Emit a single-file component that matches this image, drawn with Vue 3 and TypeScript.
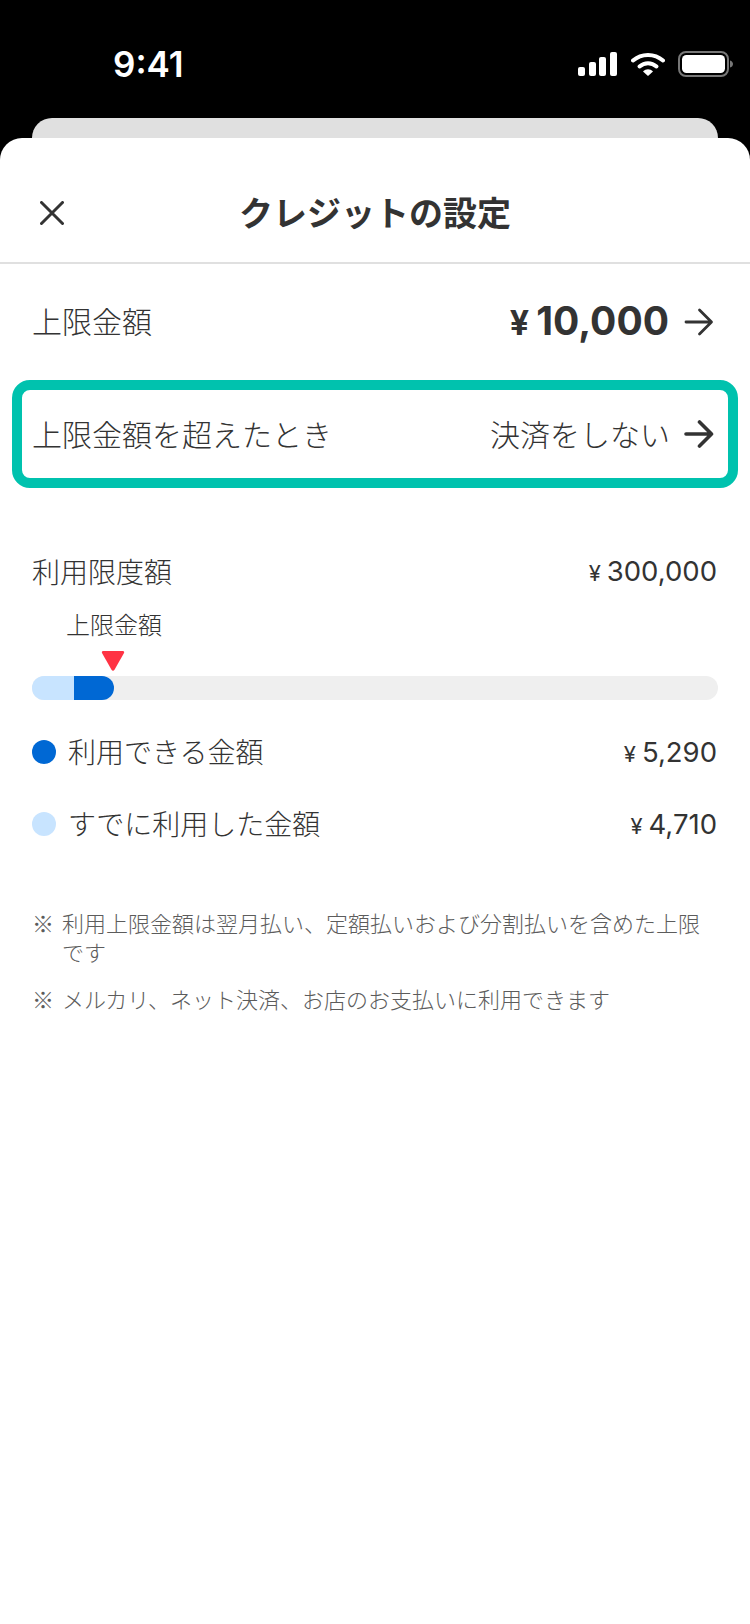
<script setup lang="ts">
interface Legend { label: string; amount: string; tone: string }
const legend: Legend[] = [
  { label: '利用できる金額', amount: '5,290', tone: 'dark' },
  { label: 'すでに利用した金額', amount: '4,710', tone: 'light' },
]
const notes: string[] = [
  '利用上限金額は翌月払い、定額払いおよび分割払いを含めた上限です',
  'メルカリ、ネット決済、お店のお支払いに利用できます',
]
</script>

<template>
  <div class="page">
    <div class="status">
      <span class="time">9:41</span>
      <div class="status-icons">
        <svg class="signal" width="40" height="24" viewBox="0 0 40 24" fill="#fff">
          <rect x="0" y="15" width="7" height="9" rx="2" />
          <rect x="11" y="10" width="7" height="14" rx="2" />
          <rect x="21" y="5" width="7" height="19" rx="2" />
          <rect x="32" y="0" width="7" height="24" rx="2" />
        </svg>
        <svg class="wifi" width="34" height="24" viewBox="0 0 34 24">
          <path d="M2 8.5C10.500 1 23.500 1 32 8.500" fill="none" stroke="#fff" stroke-width="4" stroke-linecap="round" />
          <path d="M8.500 14.500C13.500 10 20.500 10 25.500 14.500" fill="none" stroke="#fff" stroke-width="4" stroke-linecap="round" />
          <path d="M12 19.500C15 16.500 19 16.500 22 19.500L17 24Z" fill="#fff" />
        </svg>
        <svg class="battery" width="56" height="26" viewBox="0 0 56 26">
          <rect x="1" y="1" width="49" height="24" rx="7" fill="none" stroke="#777" stroke-width="2" />
          <rect x="4" y="4" width="43" height="18" rx="4.500" fill="#fff" />
          <path d="M52 9.500C54 10 55 11.500 55 13C55 14.500 54 16 52 16.500Z" fill="#777" />
        </svg>
      </div>
    </div>

    <div class="peek"></div>

    <main class="sheet">
      <header class="sheet-header">
        <svg class="close" width="24" height="24" viewBox="0 0 24 24">
          <path d="M1.500 1.500L22.500 22.500M22.500 1.500L1.500 22.500" stroke="#333" stroke-width="3" stroke-linecap="round" />
        </svg>
        <h1 class="title">クレジットの設定</h1>
      </header>

      <div class="row row-limit">
        <span class="row-label">上限金額</span>
        <span class="row-value">
          <span class="price"><span class="yen-big">¥</span>10,000</span>
          <svg class="arrow" width="30" height="28" viewBox="0 0 30 28">
            <path d="M2 14H27M15.500 2L27.500 14L15.500 26" fill="none" stroke="#333" stroke-width="2.800" stroke-linecap="round" stroke-linejoin="round" />
          </svg>
        </span>
      </div>

      <div class="row row-focus">
        <span class="row-label row-label-focus">上限金額を超えたとき</span>
        <span class="row-value row-value-tight">
          <span class="choice">決済をしない</span>
          <svg class="arrow" width="30" height="28" viewBox="0 0 30 28">
            <path d="M2 14H27M15.500 2L27.500 14L15.500 26" fill="none" stroke="#333" stroke-width="3.600" stroke-linecap="round" stroke-linejoin="round" />
          </svg>
        </span>
      </div>

      <section class="usage">
        <div class="usage-top">
          <span class="usage-title">利用限度額</span>
          <span class="amount"><span class="yen">¥</span>300,000</span>
        </div>
        <div class="marker-label">上限金額</div>
        <svg class="marker" width="24" height="21" viewBox="0 0 24 21">
          <path d="M2 1H22C23 1 23.500 2 23 3L13.500 19.800C12.800 21 11.200 21 10.500 19.800L1 3C0.500 2 1 1 2 1Z" fill="#ff3344" />
        </svg>
        <div class="track">
          <div class="seg seg-used"></div>
          <div class="seg seg-left"></div>
        </div>
        <div v-for="item in legend" :key="item.label" class="legend">
          <span class="dot" :class="item.tone"></span>
          <span class="legend-label">{{ item.label }}</span>
          <span class="amount"><span class="yen">¥</span>{{ item.amount }}</span>
        </div>
      </section>

      <section class="notes">
        <div v-for="note in notes" :key="note" class="note">
          <span class="note-mark">※</span>
          <span class="note-text">{{ note }}</span>
        </div>
      </section>
    </main>
  </div>
</template>

<style>
html, body { margin: 0; background: #000; }
</style>

<style scoped>
.page {
  width: 750px;
  height: 1624px;
  background: #000;
  display: flex;
  flex-direction: column;
  overflow: hidden;
  font-family: "Noto Sans CJK JP", "Noto Sans", sans-serif;
  color: #333;
}
.status {
  height: 118px;
  flex: none;
  display: flex;
  justify-content: space-between;
  align-items: flex-start;
  padding: 0 16px 0 113px;
  box-sizing: border-box;
}
.time {
  margin-top: 42px;
  font-family: Inter, sans-serif;
  font-weight: 600;
  font-size: 35px;
  line-height: 44px;
  color: #fff;
}
.status-icons {
  display: flex;
  align-items: center;
  margin-top: 51px;
  gap: 13px;
}
.peek {
  flex: none;
  height: 20px;
  margin: 0 32px;
  background: #e0e0e0;
  border-radius: 20px 20px 0 0;
}
.sheet {
  flex: 1;
  background: #fff;
  border-radius: 22px 22px 0 0;
}
.sheet-header {
  height: 126px;
  box-sizing: border-box;
  padding: 24px 0 0 40px;
  border-bottom: 2px solid #e0e0e0;
  display: flex;
  align-items: center;
}
.close { flex: none; margin-top: 2px; }
.title {
  flex: 1;
  margin: 0 64px 0 0;
  text-align: center;
  font-size: 34px;
  font-weight: 700;
  line-height: 48px;
  color: #333;
}
.row {
  display: flex;
  align-items: center;
  justify-content: space-between;
}
.row-limit {
  height: 116px;
  padding: 0 36px 0 32px;
}
.row-focus {
  height: 108px;
  box-sizing: border-box;
  margin: 0 12px;
  padding: 0 14px 0 10px;
  border: 10px solid #00c2ae;
  border-radius: 18px;
}
.row-label {
  font-size: 30px;
  font-weight: 300;
  line-height: 44px;
  padding-bottom: 4px;
}
.row-label-focus { padding-bottom: 3px; }
.row-value {
  display: flex;
  align-items: center;
  gap: 15px;
}
.row-value-tight { gap: 14px; }
.price {
  font-family: Inter, "Noto Sans", sans-serif;
  font-size: 39px;
  font-weight: 700;
  line-height: 56px;
}
.yen-big {
  font-size: 34px;
  margin-right: 7px;
}
.choice {
  font-size: 30px;
  font-weight: 300;
  line-height: 44px;
  padding-bottom: 3px;
}
.usage {
  padding: 63px 33px 0 32px;
}
.usage-top {
  height: 40px;
  display: flex;
  align-items: center;
  justify-content: space-between;
}
.usage-title {
  font-size: 28px;
  font-weight: 300;
}
.amount {
  font-family: Inter, "Noto Sans", sans-serif;
  font-size: 27.500px;
  font-weight: 400;
  margin-left: auto;
}
.yen {
  font-size: 22px;
  margin-right: 6px;
}
.marker-label {
  margin: 17px 0 0 34px;
  font-size: 24px;
  font-weight: 300;
  line-height: 32px;
}
.marker {
  display: block;
  margin: 10px 0 5px 69px;
}
.track {
  height: 24px;
  display: flex;
  background: #efefef;
  border-radius: 12px;
  overflow: hidden;
  margin-right: -1px;
}
.seg { height: 100%; }
.seg-used { width: 42px; background: #c8e4ff; }
.seg-left { width: 40px; background: #0068d4; border-radius: 0 12px 12px 0; }
.legend {
  height: 72px;
  display: flex;
  align-items: center;
}
.track + .legend { margin-top: 16px; }
.dot {
  width: 24px;
  height: 24px;
  border-radius: 50%;
  margin-right: 12px;
  flex: none;
}
.dot.dark { background: #0068d4; }
.dot.light { background: #c8e4ff; }
.legend-label {
  font-size: 28px;
  font-weight: 300;
  padding-bottom: 2px;
}
.notes {
  padding: 48px 32px 0;
  display: flex;
  flex-direction: column;
  gap: 18px;
  color: #5c5c5c;
  font-size: 22px;
  font-weight: 300;
  line-height: 29px;
}
.note { display: flex; gap: 8px; }
.note-mark { flex: none; }
</style>
